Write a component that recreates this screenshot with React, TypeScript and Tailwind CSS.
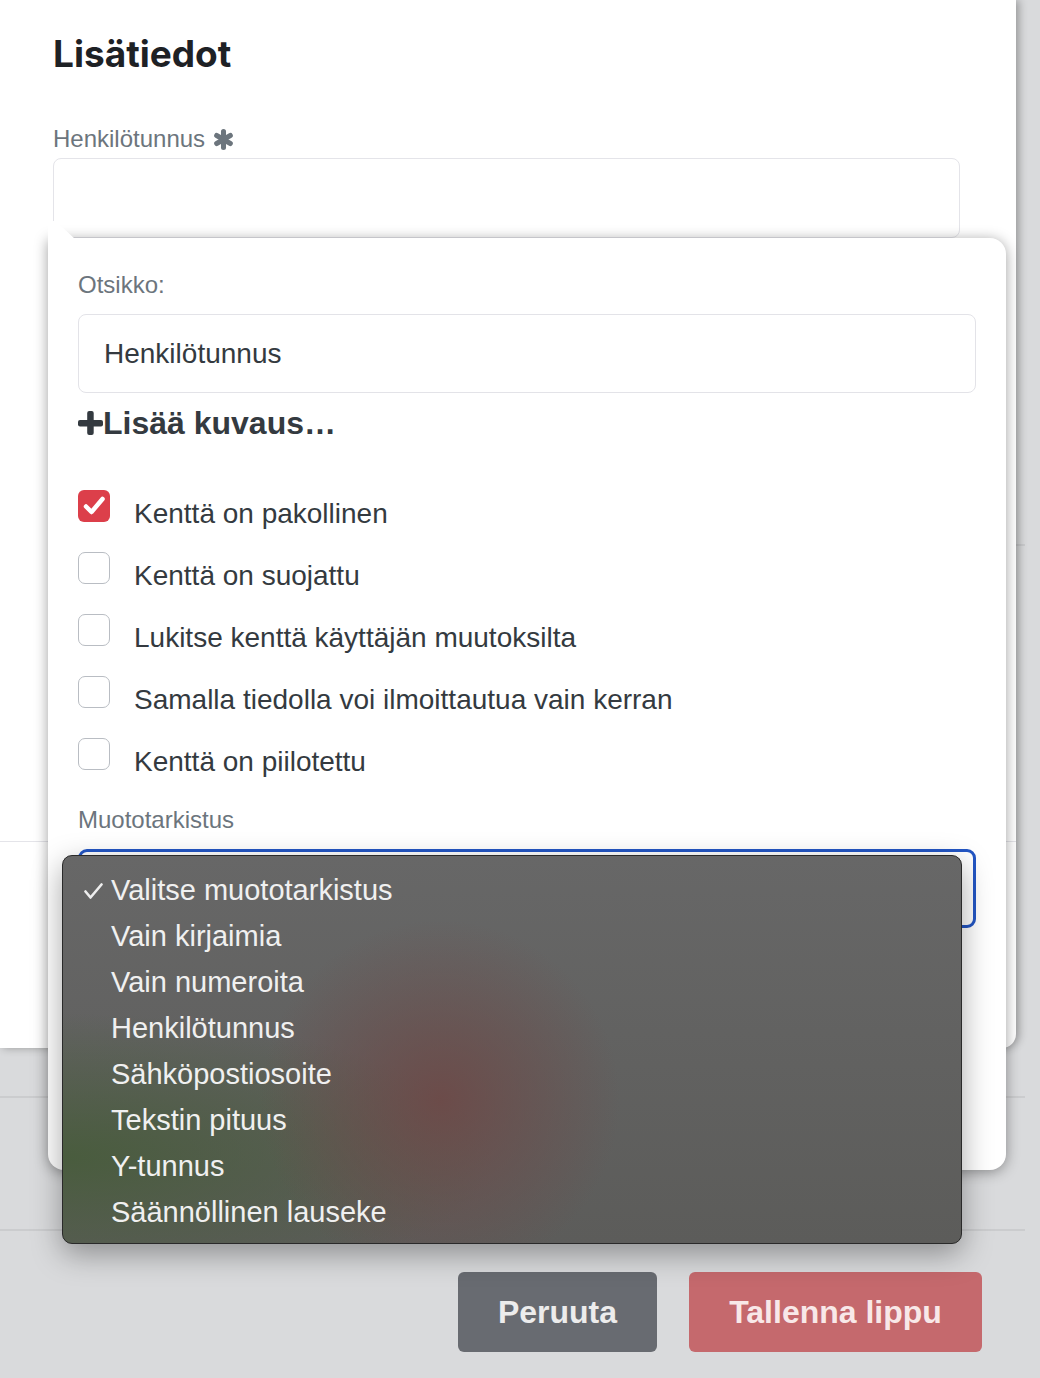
import React from "react";

const checks = [
  { label: "Kenttä on pakollinen", checked: true },
  { label: "Kenttä on suojattu", checked: false },
  { label: "Lukitse kenttä käyttäjän muutoksilta", checked: false },
  { label: "Samalla tiedolla voi ilmoittautua vain kerran", checked: false },
  { label: "Kenttä on piilotettu", checked: false },
];

const options = [
  "Valitse muototarkistus",
  "Vain kirjaimia",
  "Vain numeroita",
  "Henkilötunnus",
  "Sähköpostiosoite",
  "Tekstin pituus",
  "Y-tunnus",
  "Säännöllinen lauseke",
];

const Asterisk = () => (
  <svg width="21" height="21" viewBox="0 0 20 20" className="ml-2">
    <g stroke="#6c757d" strokeWidth="4.8" strokeLinecap="round">
      <line x1="10" y1="2.5" x2="10" y2="17.5" />
      <line x1="3.5" y1="6.2" x2="16.5" y2="13.8" />
      <line x1="3.5" y1="13.8" x2="16.5" y2="6.2" />
    </g>
  </svg>
);

const Checkbox = ({ checked }: { checked: boolean }) =>
  checked ? (
    <div className="w-[32px] h-[32px] rounded-[6px] bg-[#dc3f4a] flex items-center justify-center shrink-0">
      <svg width="32" height="32" viewBox="0 0 32 32">
        <path d="M8 16.5 L13.5 22 L24.5 9" fill="none" stroke="#fff" strokeWidth="4.5" strokeLinecap="round" strokeLinejoin="round" />
      </svg>
    </div>
  ) : (
    <div className="w-[32px] h-[32px] rounded-[7px] border-[1.5px] border-[#b9bdc3] bg-white shrink-0" />
  );

export default function App() {
  return (
    <div className="relative w-[1040px] h-[1378px] overflow-hidden bg-[#d9dadc] font-['Liberation_Sans',Arial,sans-serif]">
      {/* dimmed page behind the drawer */}
      <div className="w-[1025px]">
        <div className="h-[546px] border-b-2 border-[#cbccce]" />
        <div className="h-[552px] border-b-2 border-[#cbccce]" />
        <div className="h-[133px] border-b-2 border-[#cbccce]" />
      </div>
      <div className="flex justify-end gap-[32px] pr-[58px] mt-[41px]">
        <button className="w-[199px] h-[80px] rounded-[6px] bg-[#686b71] text-[32px] font-bold text-[#ececec]">
          Peruuta
        </button>
        <button className="w-[293px] h-[80px] rounded-[6px] bg-[#c5696d] text-[32px] font-bold text-[#f8e8e8]">
          Tallenna lippu
        </button>
      </div>

      {/* drawer */}
      <div className="absolute left-0 top-0 w-[1016px] h-[1048px] bg-white rounded-br-[14px] shadow-[3px_0_8px_rgba(0,0,0,0.3)]">
        <div className="pl-[53px] pr-[56px] pt-[35px]">
          <h2 className="font-['Inter',sans-serif] font-bold text-[37px] leading-none text-[#1e2125]">Lisätiedot</h2>
          <div className="mt-[55px] flex items-center text-[24px] leading-none text-[#6c757d]">
            Henkilötunnus
            <Asterisk />
          </div>
          <div className="mt-[7px] h-[80px] border border-[#e4e4e9] rounded-[8px]" />
        </div>
        <div className="h-[604px] border-b border-[#e4e4e9]" />
      </div>

      {/* field settings popover */}
      <div className="absolute left-[48px] top-[238px] w-[958px] h-[932px] bg-white rounded-[16px] rounded-tl-none shadow-[0_2px_14px_rgba(0,0,0,0.38)]">
        <div className="absolute left-0 -top-[17px] w-[27px] h-[18px] bg-white [clip-path:polygon(0_0,28%_0,100%_100%,0_100%)]" />
        <div className="px-[30px] pt-[35px]">
          <div className="text-[24px] leading-none text-[#6c757d]">Otsikko:</div>
          <div className="mt-[17px] h-[79px] border-[1.5px] border-[#e3e3e8] rounded-[8px] px-[25px] flex items-center text-[28px] text-[#343a40]">
            Henkilötunnus
          </div>
          <div className="mt-[14px] flex items-center text-[32px] leading-none font-bold text-[#343a40]">
            <svg width="25" height="24" viewBox="0 0 25 24">
              <rect x="0" y="9" width="25" height="6.5" rx="2" fill="#343a40" />
              <rect x="9.2" y="0" width="6.5" height="24" rx="2" fill="#343a40" />
            </svg>
            Lisää kuvaus…
          </div>
          <div className="mt-[51px] flex flex-col gap-[30px]">
            {checks.map((c) => (
              <div key={c.label} className="h-[32px] flex items-center gap-[24px]">
                <Checkbox checked={c.checked} />
                <span className="text-[28px] text-[#343a40] leading-none translate-y-[8px]">{c.label}</span>
              </div>
            ))}
          </div>
          <div className="mt-[38px] text-[24px] leading-none text-[#6c757d]">Muototarkistus</div>
          <div className="mt-[17px] h-[79px] border-[3px] border-[#2356c4] rounded-[9px]" />
        </div>

        {/* native select menu */}
        <div className="absolute left-[14px] top-[617px] w-[900px] h-[389px] rounded-[10px] border border-[#2a2a2a] bg-[#666666] bg-[radial-gradient(circle_at_42%_63%,rgba(110,72,70,0.85)_0,rgba(102,102,102,0)_180px),radial-gradient(ellipse_at_0%_78%,rgba(72,92,60,0.95)_0,rgba(102,102,102,0)_430px),linear-gradient(#676767,#5c5c5a)] shadow-[0_10px_30px_rgba(0,0,0,0.35)] pt-[12px]">
          {options.map((o, i) => (
            <div key={o} className="h-[46px] flex items-center pl-[21px] text-[29px] text-[#f0f0f0]">
              <span className="w-[27px] flex items-center">
                {i === 0 && (
                  <svg width="19" height="16" viewBox="0 0 19 16">
                    <path d="M1.5 8.5 L6.5 14.5 L17.5 1.5" fill="none" stroke="#eeeeee" strokeWidth="2.6" strokeLinecap="round" strokeLinejoin="round" />
                  </svg>
                )}
              </span>
              {o}
            </div>
          ))}
        </div>
      </div>
    </div>
  );
}
